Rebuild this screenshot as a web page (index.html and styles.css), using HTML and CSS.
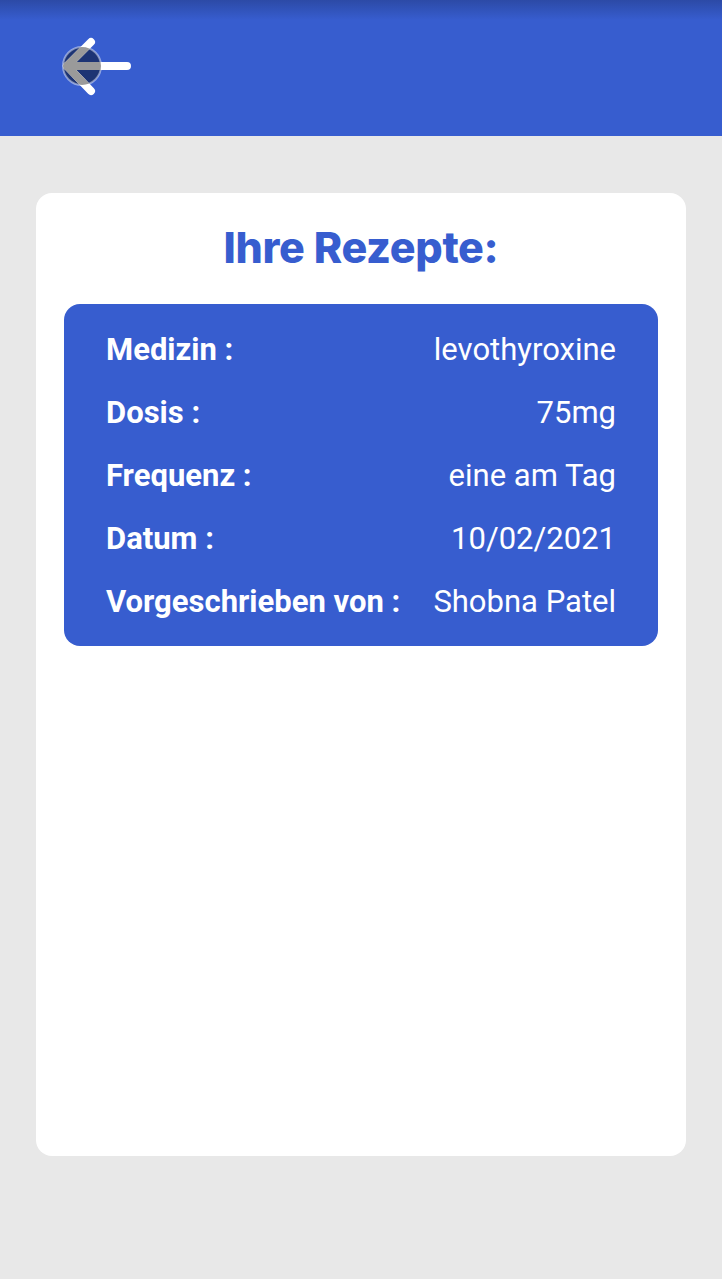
FILE: index.html
```html
<!DOCTYPE html>
<html lang="de">
<head>
<meta charset="utf-8">
<title>Ihre Rezepte</title>
<link rel="stylesheet" href="styles.css">
</head>
<body>
<header class="topbar">
  <button class="back" aria-label="Zurück">
    <svg width="90" height="72" viewBox="50 30 90 72">
      <defs>
        <clipPath id="c"><circle cx="82" cy="66" r="19"/></clipPath>
      </defs>
      <circle cx="82" cy="66" r="19" fill="#1d3474" stroke="rgba(255,255,255,0.45)" stroke-width="2"/>
      <g stroke="#ffffff" stroke-width="8" stroke-linecap="round" stroke-linejoin="round" fill="none">
        <path d="M67 66 H127 M67 66 L91 42 M67 66 L91 91"/>
      </g>
      <g clip-path="url(#c)" stroke="#9a9a9a" stroke-width="8" stroke-linecap="round" stroke-linejoin="round" fill="none">
        <path d="M67 66 H127 M67 66 L91 42 M67 66 L91 91"/>
      </g>
    </svg>
  </button>
</header>
<main class="page">
  <section class="panel">
    <h1 class="title">Ihre Rezepte:</h1>
    <div class="rx">
      <div class="row"><span class="label">Medizin :</span><span class="value">levothyroxine</span></div>
      <div class="row"><span class="label">Dosis :</span><span class="value">75mg</span></div>
      <div class="row"><span class="label">Frequenz :</span><span class="value">eine am Tag</span></div>
      <div class="row"><span class="label">Datum :</span><span class="value">10/02/2021</span></div>
      <div class="row"><span class="label">Vorgeschrieben von :</span><span class="value">Shobna Patel</span></div>
    </div>
  </section>
</main>
</body>
</html>
```
FILE: styles.css
```css
* { box-sizing: border-box; }
html, body { margin: 0; padding: 0; }
body {
  background: #e8e8e8;
  font-family: Roboto, "Liberation Sans", sans-serif;
  min-height: 1279px;
}
.topbar {
  height: 136px;
  background: linear-gradient(to bottom, #2c4aa6 0px, #375dcf 20px, #375dcf 100%);
  padding: 30px 0 0 50px;
  display: flex;
  align-items: flex-start;
}
.back {
  border: 0;
  padding: 0;
  margin: 0;
  background: none;
  display: block;
  line-height: 0;
}
.page {
  padding: 57px 36px 0 36px;
}
.panel {
  background: #ffffff;
  border-radius: 16px;
  height: 963px;
  padding: 25px 28px 0 28px;
}
.title {
  margin: 0;
  text-align: center;
  font-family: Inter, "Open Sans", sans-serif;
  font-weight: 800;
  font-size: 43px;
  line-height: 58px;
  color: #375dcf;
  letter-spacing: -0.3px;
}
.rx {
  margin-top: 28px;
  background: #375dcf;
  border-radius: 16px;
  padding: 14px 42px 13px 42px;
  color: #ffffff;
}
.row {
  display: flex;
  justify-content: space-between;
  align-items: center;
  height: 63px;
  font-size: 31px;
}
.label { font-weight: 700; }
.value { font-weight: 400; }
```
